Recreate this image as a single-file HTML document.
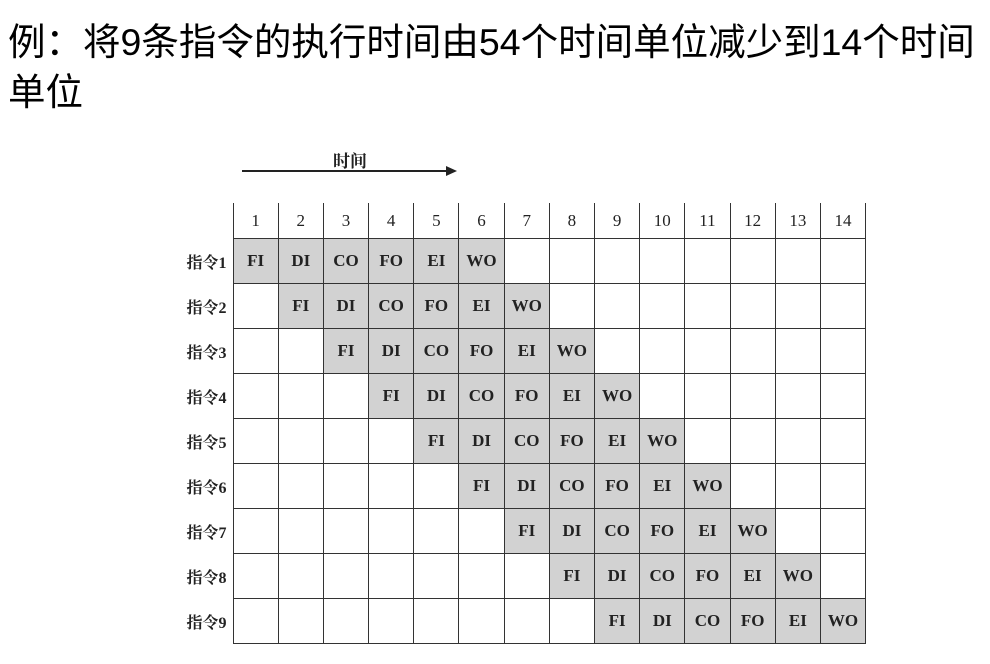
<!DOCTYPE html>
<html><head><meta charset="utf-8">
<style>
body{margin:0;width:990px;height:664px;background:#fff;position:relative;overflow:hidden}
.t{position:absolute;left:8px;top:17px;font:37.5px/50px "Liberation Sans","Noto Sans CJK SC",sans-serif;color:#000;width:985px;white-space:nowrap}
.cap{position:absolute;left:333px;top:147px;font:bold 17px "Noto Serif CJK SC",serif;color:#222}
.arr{position:absolute;left:242px;top:170px;width:205px;height:2px;background:#222}
.ah{position:absolute;left:446px;top:166px;width:0;height:0;border-left:11px solid #222;border-top:5px solid transparent;border-bottom:5px solid transparent}
table{position:absolute;left:163px;top:203px;border-collapse:collapse;table-layout:fixed;width:703px;font-family:"Liberation Serif","Noto Serif CJK SC",serif;color:#222}
td{height:44px;border:1.5px solid #333;text-align:center;font-size:17px;font-weight:bold;padding:0;overflow:hidden;white-space:nowrap}
tr.h td{height:35px;border-top:none;border-bottom:1.5px solid #333;font-weight:normal;font-size:17px}
td.l{border:none;text-align:right;padding-right:6px;font-size:16px;font-weight:bold}
tr.h td.l{border-bottom:none}
td.g{background:#d2d2d2}
</style></head><body>
<div class="t">例：将9条指令的执行时间由54个时间单位减少到14个时间<br>单位</div>
<div class="cap">时间</div>
<div class="arr"></div><div class="ah"></div>
<table>
<colgroup><col style="width:70px"><col span="14" style="width:45.2px"></colgroup>
<tr class="h"><td class="l"></td><td>1</td><td>2</td><td>3</td><td>4</td><td>5</td><td>6</td><td>7</td><td>8</td><td>9</td><td>10</td><td>11</td><td>12</td><td>13</td><td>14</td></tr>
<tr><td class="l">指令1</td><td class="g">FI</td><td class="g">DI</td><td class="g">CO</td><td class="g">FO</td><td class="g">EI</td><td class="g">WO</td><td></td><td></td><td></td><td></td><td></td><td></td><td></td><td></td></tr>
<tr><td class="l">指令2</td><td></td><td class="g">FI</td><td class="g">DI</td><td class="g">CO</td><td class="g">FO</td><td class="g">EI</td><td class="g">WO</td><td></td><td></td><td></td><td></td><td></td><td></td><td></td></tr>
<tr><td class="l">指令3</td><td></td><td></td><td class="g">FI</td><td class="g">DI</td><td class="g">CO</td><td class="g">FO</td><td class="g">EI</td><td class="g">WO</td><td></td><td></td><td></td><td></td><td></td><td></td></tr>
<tr><td class="l">指令4</td><td></td><td></td><td></td><td class="g">FI</td><td class="g">DI</td><td class="g">CO</td><td class="g">FO</td><td class="g">EI</td><td class="g">WO</td><td></td><td></td><td></td><td></td><td></td></tr>
<tr><td class="l">指令5</td><td></td><td></td><td></td><td></td><td class="g">FI</td><td class="g">DI</td><td class="g">CO</td><td class="g">FO</td><td class="g">EI</td><td class="g">WO</td><td></td><td></td><td></td><td></td></tr>
<tr><td class="l">指令6</td><td></td><td></td><td></td><td></td><td></td><td class="g">FI</td><td class="g">DI</td><td class="g">CO</td><td class="g">FO</td><td class="g">EI</td><td class="g">WO</td><td></td><td></td><td></td></tr>
<tr><td class="l">指令7</td><td></td><td></td><td></td><td></td><td></td><td></td><td class="g">FI</td><td class="g">DI</td><td class="g">CO</td><td class="g">FO</td><td class="g">EI</td><td class="g">WO</td><td></td><td></td></tr>
<tr><td class="l">指令8</td><td></td><td></td><td></td><td></td><td></td><td></td><td></td><td class="g">FI</td><td class="g">DI</td><td class="g">CO</td><td class="g">FO</td><td class="g">EI</td><td class="g">WO</td><td></td></tr>
<tr><td class="l">指令9</td><td></td><td></td><td></td><td></td><td></td><td></td><td></td><td></td><td class="g">FI</td><td class="g">DI</td><td class="g">CO</td><td class="g">FO</td><td class="g">EI</td><td class="g">WO</td></tr>
</table>
</body></html>
